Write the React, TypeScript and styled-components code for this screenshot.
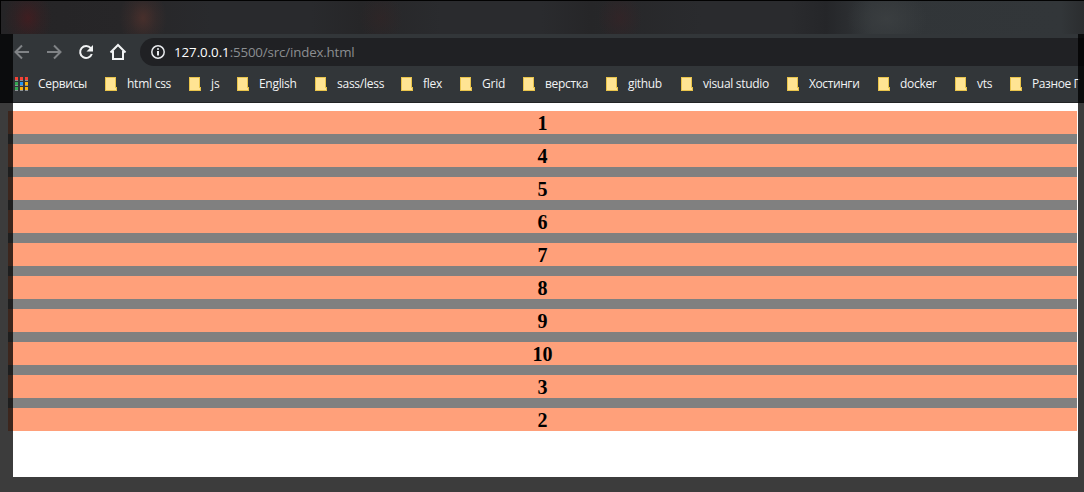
import React from "react";
import styled, { createGlobalStyle } from "styled-components";

const GlobalStyle = createGlobalStyle`
  html, body { margin: 0; background: #fff; overflow: hidden; }
  * { box-sizing: border-box; }
`;

const Window = styled.div`
  position: relative;
  width: 1084px;
  height: 492px;
  overflow: hidden;
  display: flex;
  flex-direction: column;
  background: #fff;
  font-family: "Open Sans", "Noto Sans", sans-serif;
`;

const TabStrip = styled.div`
  flex: none;
  height: 34px;
  border-top: 1px solid #020202;
  border-left: 1px solid #020202;
  background:
    radial-gradient(ellipse 24px 30px at 27px 17px, rgba(84, 24, 28, 0.55), rgba(84, 24, 28, 0.18) 55%, transparent),
    radial-gradient(ellipse 24px 30px at 142px 17px, rgba(98, 54, 46, 0.55), rgba(98, 54, 46, 0.18) 55%, transparent),
    radial-gradient(ellipse 22px 26px at 380px 17px, rgba(58, 34, 34, 0.35), transparent),
    radial-gradient(ellipse 22px 26px at 619px 17px, rgba(64, 32, 36, 0.4), transparent),
    radial-gradient(ellipse 40px 32px at 886px 18px, rgba(62, 66, 68, 0.7), transparent),
    linear-gradient(90deg, #252426 0, #272628 120px, #292a2d 210px, #292a2d 310px, #262628 360px, #2a2b2e 440px, #2a2b2e 540px, #262628 590px, #2a2b2e 700px, #2a2b2e 790px, #252629 825px, #313538 870px, #323639 1060px, #2b2d2f 1083px);
`;

const Chrome = styled.div`
  flex: none;
  height: 69px;
  padding: 4px 0 0 13px;
  background: #323639;
  border-bottom: 1px solid #222426;
`;

const Toolbar = styled.div`
  display: flex;
  align-items: center;
  height: 28px;
`;

const NavIcon = styled.svg<{ $gap: number }>`
  flex: none;
  width: 18px;
  height: 18px;
  margin-right: ${(p) => p.$gap}px;
  fill: none;
  stroke-width: 2;
`;

const AddressBar = styled.div`
  flex: 1;
  display: flex;
  align-items: center;
  height: 28px;
  padding-left: 10px;
  border-radius: 14px 0 0 14px;
  background: #202124;
  color: #8b8e91;
  font-size: 13.3px;
  line-height: 28px;
  white-space: pre;
`;

const Url = styled.span`
  margin-left: 8px;
  letter-spacing: -0.15px;
`;

const Host = styled.span`
  color: #fff;
  letter-spacing: -0.05px;
`;

const Bookmarks = styled.div`
  display: flex;
  align-items: center;
  gap: 18px;
  height: 36px;
  padding-left: 2px;
`;

const Bookmark = styled.div`
  flex: none;
  display: flex;
  align-items: center;
  color: #f1f3f4;
  font-size: 12px;
  line-height: 20px;
`;

const BookmarkIcon = styled.svg<{ $gap: number }>`
  flex: none;
  width: 13px;
  height: 14px;
  margin-right: ${(p) => p.$gap}px;
`;

const Label = styled.span<{ $w: number; $tracking: number }>`
  width: ${(p) => p.$w}px;
  letter-spacing: ${(p) => p.$tracking}px;
  white-space: nowrap;
`;

const Page = styled.main`
  flex: 1;
  padding: 8px 7px 0 8px;
`;

const Grid = styled.div`
  display: grid;
  gap: 10px;
  background: #808080;
`;

const Cell = styled.div`
  height: 23px;
  background: #ffa07a;
  color: #000;
  text-align: center;
  font: bold 20px/25px "Liberation Serif", serif;
`;

const Shade = styled.div`
  position: absolute;
  inset: 34px 0 0 0;
  border: solid rgba(0, 0, 0, 0.765);
  border-width: 0 6px 15px 13px;
  pointer-events: none;
`;

const bookmarks: { text: string; width: number; tracking: number }[] = [
  { text: "html css", width: 44, tracking: -0.25 },
  { text: "js", width: 8, tracking: -0.1 },
  { text: "English", width: 38, tracking: -0.3 },
  { text: "sass/less", width: 46, tracking: -0.25 },
  { text: "flex", width: 19, tracking: -0.3 },
  { text: "Grid", width: 23, tracking: -0.25 },
  { text: "верстка", width: 43, tracking: -0.3 },
  { text: "github", width: 35, tracking: -0.35 },
  { text: "visual studio", width: 66, tracking: -0.3 },
  { text: "Хостинги", width: 51, tracking: -0.4 },
  { text: "docker", width: 37, tracking: -0.3 },
  { text: "vts", width: 15, tracking: -0.2 },
  { text: "Разное Г", width: 50, tracking: -0.4 },
];

const appColors = ["#f44336", "#f44336", "#f44336", "#34a853", "#2196f3", "#fbb109", "#34a853", "#fbb109", "#fbb109"];

const Folder = () => (
  <BookmarkIcon $gap={9} viewBox="0 0 13 14" shapeRendering="crispEdges">
    <path d="M0 0h11v10h1v4H0z" fill="#e9c44b" />
    <path d="M1 1h9v12H1z" fill="#ffe493" />
    <path d="M10 11h1v2h-1z" fill="#ffe493" />
  </BookmarkIcon>
);

export default function App() {
  return (
    <Window>
      <GlobalStyle />
      <TabStrip />
      <Chrome>
        <Toolbar>
          <NavIcon $gap={14} stroke="#808386">
            <path d="M16 9H3M9 2.5L2.5 9L9 15.5" />
          </NavIcon>
          <NavIcon $gap={14} stroke="#808386">
            <path d="M2 9h13M9 2.5L15.5 9L9 15.5" />
          </NavIcon>
          <NavIcon $gap={14} stroke="#f1f3f4">
            <path d="M13.8 5.2A6 6 0 1 0 14.8 11" />
            <path d="M16 2v6.5H9.5z" fill="#f1f3f4" stroke="none" />
          </NavIcon>
          <NavIcon $gap={13} stroke="#f1f3f4">
            <path d="M1.5 9.5L9 2l7.5 7.5M4 8v8h10V8" />
          </NavIcon>
          <AddressBar>
            <NavIcon $gap={-2} stroke="#e8eaed">
              <circle cx="8" cy="9" r="6.2" strokeWidth="1.5" />
              <path d="M8 8v4.5M8 5.2v1.6" />
            </NavIcon>
            <Url>
              <Host>127.0.0.1</Host>:5500/src/index.html
            </Url>
          </AddressBar>
        </Toolbar>
        <Bookmarks>
          <Bookmark>
            <BookmarkIcon $gap={10} viewBox="0 0 13 14" shapeRendering="crispEdges">
              {appColors.map((c, i) => (
                <g key={i}>
                  <rect x={(i % 3) * 5} y={Math.floor(i / 3) * 5} width="3" height="3" fill={c} />
                  <rect x={(i % 3) * 5} y={Math.floor(i / 3) * 5 + 3} width="3" height="1" fill="#8d9296" />
                </g>
              ))}
            </BookmarkIcon>
            <Label $w={49} $tracking={-0.3}>Сервисы</Label>
          </Bookmark>
          {bookmarks.map(({ text, width, tracking }) => (
            <Bookmark key={text}>
              <Folder />
              <Label $w={width} $tracking={tracking}>{text}</Label>
            </Bookmark>
          ))}
        </Bookmarks>
      </Chrome>
      <Page>
        <Grid>
          {[1, 4, 5, 6, 7, 8, 9, 10, 3, 2].map((n) => (
            <Cell key={n}>{n}</Cell>
          ))}
        </Grid>
      </Page>
      <Shade />
    </Window>
  );
}
